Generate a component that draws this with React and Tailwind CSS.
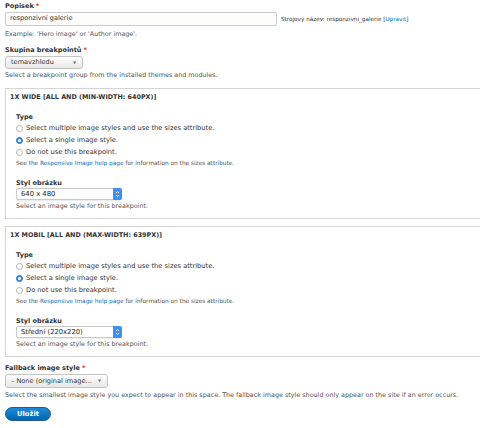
import React from "react";

const font = { fontFamily: '"DejaVu Sans", "Liberation Sans", sans-serif' };

function Req() {
  return <span className="text-[#e32700] ml-[2px]">*</span>;
}

function Label({ children, className = "" }) {
  return <div className={`text-[6.5px] font-bold text-[#333] leading-[10px] ${className}`}>{children}</div>;
}

function Desc({ children, className = "" }) {
  return <div className={`text-[6.4px] text-[#555] leading-[10px] whitespace-nowrap ${className}`}>{children}</div>;
}

function Radio({ checked, label }) {
  return (
    <div className="flex items-center h-[12px] gap-[3px] text-[6.7px] text-[#333]">
      {checked ? (
        <span className="w-[7px] h-[7px] rounded-full bg-[#3b8fe6] border border-[#2a78cf] flex items-center justify-center">
          <span className="w-[3px] h-[3px] rounded-full bg-white" />
        </span>
      ) : (
        <span className="w-[7px] h-[7px] rounded-full bg-white border border-[#b4b4b4]" />
      )}
      <span>{label}</span>
    </div>
  );
}

function MacSelect({ value }) {
  return (
    <div className="flex items-center w-[106px] h-[12px] border border-[#c8c8c8] rounded-[2px] bg-white text-[6.8px] text-[#222] shadow-[0_1px_1px_rgba(0,0,0,0.08)]">
      <span className="flex-1 pl-[4px] leading-none">{value}</span>
      <span className="w-[9px] h-[12px] -my-px -mr-px rounded-r-[2px] bg-[#3d8ff0] flex items-center justify-center">
        <svg width="5" height="8" viewBox="0 0 5 8">
          <path d="M1 3 L2.5 1.5 L4 3 M1 5 L2.5 6.5 L4 5" stroke="white" strokeWidth="0.9" fill="none" />
        </svg>
      </span>
    </div>
  );
}

function SevenSelect({ value, w, h }) {
  return (
    <div className={`flex items-center ${w} ${h} border border-[#c4c4c4] rounded-[3px] bg-gradient-to-b from-[#fefefe] to-[#e8e8e8] text-[6.6px] text-[#333] pl-[5px] pr-[6px] whitespace-nowrap`}>
      <span className="flex-1 leading-none">{value}</span>
      <span className="text-[4px] text-[#777]">▼</span>
    </div>
  );
}

function Breakpoint({ title, styleValue }) {
  return (
    <div className="w-[490px] border border-[#d4d4d4] bg-white pt-[2px] pb-[7px]">
      <div className="pl-[4px] text-[6.4px] font-bold text-[#333] uppercase leading-[12px]">{title}</div>
      <div className="pl-[10px] pt-[9px]">
        <Label>Type</Label>
        <div>
          <Radio label="Select multiple image styles and use the sizes attribute." />
          <Radio checked label="Select a single image style." />
          <Radio label="Do not use this breakpoint." />
        </div>
        <div className="text-[5.8px] text-[#555] leading-[10px] whitespace-nowrap">
          See the <span className="text-[#0074bd]">Responsive Image help page</span> for information on the sizes attribute.
        </div>
        <Label className="mt-[10px]">Styl obrázku</Label>
        <MacSelect value={styleValue} />
        <Desc className="mt-[1px]">Select an image style for this breakpoint.</Desc>
      </div>
    </div>
  );
}

export default function App() {
  return (
    <div style={font} className="w-[480px] h-[428px] overflow-hidden bg-white pl-[5px] pt-[1px]">
      <Label>
        Popisek<Req />
      </Label>
      <div className="flex items-center mt-[1px]">
        <div className="w-[272px] h-[14px] border border-[#ccc] rounded-[2px] bg-[#fcfcfa] pl-[4px] text-[6.6px] text-[#333] flex items-center">
          responzivní galerie
        </div>
        <span className="ml-[4px] text-[5.7px] text-[#333]">
          Strojový název: responzivni_galerie [<span className="text-[#0074bd]">Upravit</span>]
        </span>
      </div>
      <Desc className="mt-[3px]">Example: 'Hero image' or 'Author image'.</Desc>

      <Label className="mt-[6px]">
        Skupina breakpointů<Req />
      </Label>
      <div className="mt-[1px]">
        <SevenSelect value="temavzhledu" w="w-[78px]" h="h-[13px]" />
      </div>
      <Desc className="mt-[1px]">Select a breakpoint group from the installed themes and modules.</Desc>

      <div className="mt-[8px]">
        <Breakpoint title="1x Wide [all and (min-width: 640px)]" styleValue="640 x 480" />
      </div>
      <div className="mt-[7px]">
        <Breakpoint title="1x Mobil [all and (max-width: 639px)]" styleValue="Střední (220x220)" />
      </div>

      <Label className="mt-[6px]">
        Fallback image style<Req />
      </Label>
      <div className="mt-[1px]">
        <SevenSelect value="– None (original image..." w="w-[103px]" h="h-[14px]" />
      </div>
      <Desc className="mt-[2px]">
        Select the smallest image style you expect to appear in this space. The fallback image style should only appear on the site if an error occurs.
      </Desc>
      <button className="mt-[7px] w-[46px] h-[14px] rounded-full bg-gradient-to-b from-[#1a8ad6] to-[#0067b0] border border-[#1e5c90] text-white text-[6.8px] font-bold leading-none flex items-center justify-center">
        Uložit
      </button>
    </div>
  );
}
